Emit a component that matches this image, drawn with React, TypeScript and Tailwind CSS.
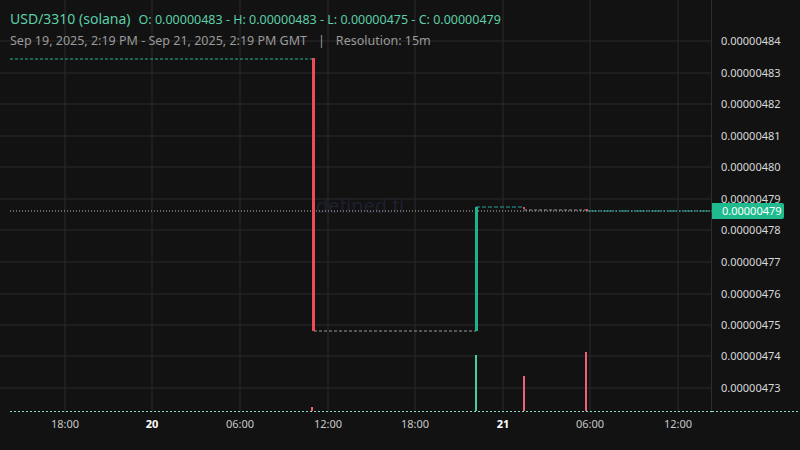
const yLabels = [
  ["0.00000484", 41],
  ["0.00000483", 73],
  ["0.00000482", 104],
  ["0.00000481", 136],
  ["0.00000480", 167],
  ["0.00000479", 199],
  ["0.00000478", 230],
  ["0.00000477", 262],
  ["0.00000476", 294],
  ["0.00000475", 325],
  ["0.00000474", 356],
  ["0.00000473", 388],
] as const;

const xLabels = [
  ["18:00", 65, false],
  ["20", 152, true],
  ["06:00", 240, false],
  ["12:00", 328, false],
  ["18:00", 415, false],
  ["21", 503, true],
  ["06:00", 590, false],
  ["12:00", 678, false],
] as const;

export default function App() {
  return (
    <div className="flex h-[450px] w-[800px] flex-col bg-[#121212] font-['Open_Sans',sans-serif]">
      <div className="flex flex-1">
        <div className="relative w-[712px] border-r border-[#2e2e2e]">
          <svg width="712" height="413" className="absolute left-0 top-0">
            {xLabels.map(([, x], i) => (
              <line key={i} x1={x} y1={0} x2={x} y2={413} stroke="#2a2a2a" />
            ))}
            {yLabels.map(([, y], i) => (
              <line key={i} x1={0} y1={y} x2={712} y2={y} stroke="#2a2a2a" />
            ))}
            <text x="360" y="213" textAnchor="middle" fill="#1f2030" fontSize="20" fontFamily="Open Sans">defined.fi</text>
            <line x1="10" y1="59" x2="312" y2="59" stroke="#26b39a" strokeDasharray="3 2" />
            <line x1="10" y1="211" x2="712" y2="211" stroke="#bbbbbb" strokeDasharray="1 2" />
            <line x1="314" y1="331" x2="476" y2="331" stroke="#999" strokeDasharray="3 2" />
            <line x1="476" y1="207" x2="524" y2="207" stroke="#26a69a" strokeDasharray="4 2" />
            <line x1="524" y1="210" x2="587" y2="210" stroke="#999" strokeDasharray="3 2" />
            <line x1="587" y1="211" x2="712" y2="211" stroke="#26a69a" strokeDasharray="10 2 2 2" />
            <rect x="312" y="58" width="3" height="273" fill="#f04a55" />
            <rect x="475" y="207" width="3" height="124" fill="#21b08f" />
            <rect x="523" y="207" width="2" height="2" fill="#f04a55" />
            <rect x="586" y="209" width="2" height="2" fill="#f04a55" />
            <rect x="475" y="355" width="2" height="56" fill="#4ec9a6" />
            <rect x="523" y="376" width="2" height="35" fill="#ee6074" />
            <rect x="585" y="352" width="2" height="59" fill="#ee6074" />
            <rect x="311" y="407" width="2" height="4" fill="#ee6074" />
            <line x1="10" y1="411.5" x2="712" y2="411.5" stroke="#8fd6c0" strokeDasharray="2 2" />
          </svg>
          <div className="absolute left-[10px] top-[8px] flex flex-col gap-[2px]">
            <div className="flex items-baseline gap-2 text-[#5ccfa8]">
              <span className="text-[14px]">USD/3310 (solana)</span>
              <span className="text-[12.5px]">O: 0.00000483 - H: 0.00000483 - L: 0.00000475 - C: 0.00000479</span>
            </div>
            <div className="flex gap-[11px] text-[12.5px] text-[#9a9a9a]">
              <span>Sep 19, 2025, 2:19 PM - Sep 21, 2025, 2:19 PM GMT</span>
              <span>|</span>
              <span>Resolution: 15m</span>
            </div>
          </div>
        </div>
        <div className="relative flex-1 text-[11px] text-[#d8d8d8]">
          {yLabels.map(([t, y]) => (
            <div key={t} className="absolute left-[9px] -translate-y-1/2" style={{ top: y }}>{t}</div>
          ))}
          <div className="absolute left-0 top-[203px] h-[16px] w-[72px] rounded-r-[2px] bg-[#1fba8d] pl-[10px] text-[11px] leading-[16px] text-white">0.00000479</div>
          <svg width="88" height="413" className="absolute left-0 top-0">
            <line x1="0" y1="411.5" x2="88" y2="411.5" stroke="#8fd6c0" strokeDasharray="2 2" />
          </svg>
        </div>
      </div>
      <div className="relative h-[37px] text-[11px] text-[#c8c8c8]">
        {xLabels.map(([t, x, b]) => (
          <span key={x} className={`absolute top-[3px] -translate-x-1/2 ${b ? "font-bold text-white" : ""}`} style={{ left: x }}>{t}</span>
        ))}
      </div>
    </div>
  );
}
